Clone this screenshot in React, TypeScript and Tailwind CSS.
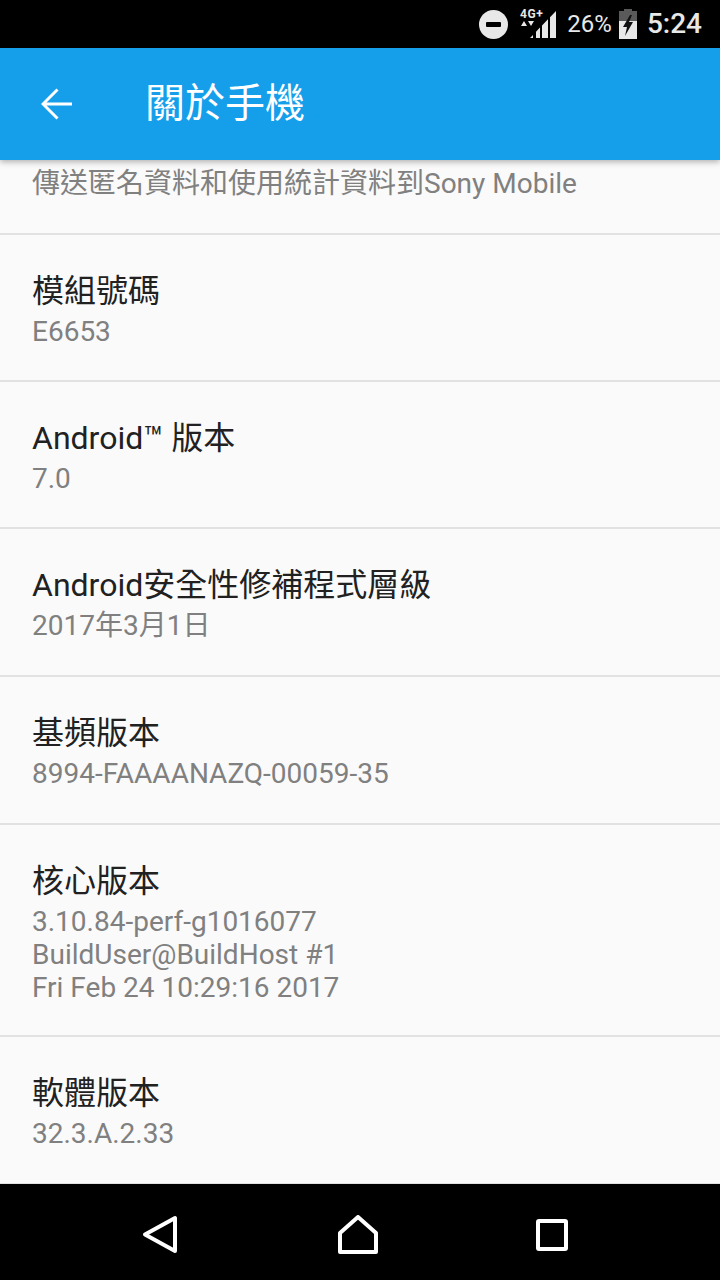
const font = "font-['Roboto','Noto_Sans_CJK_TC',sans-serif]";

type Info = { title: string; lines: string[]; height: string };

const rows: Info[] = [
  { title: '模組號碼', lines: ['E6653'], height: 'h-[147px]' },
  { title: 'Android™ 版本', lines: ['7.0'], height: 'h-[147px]' },
  { title: 'Android安全性修補程式層級', lines: ['2017年3月1日'], height: 'h-[148px]' },
  { title: '基頻版本', lines: ['8994-FAAAANAZQ-00059-35'], height: 'h-[148px]' },
  {
    title: '核心版本',
    lines: ['3.10.84-perf-g1016077', 'BuildUser@BuildHost #1', 'Fri Feb 24 10:29:16 2017'],
    height: 'h-[212px]',
  },
  { title: '軟體版本', lines: ['32.3.A.2.33'], height: 'h-[148px]' },
];

function SignalIcon() {
  return (
    <svg width="38" height="30" viewBox="0 0 38 30" className="text-[#e8e8e8]">
      <text x="0" y="9" fontSize="12" fontWeight="700" letterSpacing="0.6" fill="currentColor" fontFamily="Roboto, sans-serif">
        4G+
      </text>
      <path d="M1 17l3-5 3 5zM8 12h6l-3 5z" fill="currentColor" />
      <path d="M10 29h3v-3zM16 29h4V18.6l-4 4.2zM22 29h6V10.3l-6 6.2zM30 29h6V2l-6 6.2z" fill="currentColor" />
    </svg>
  );
}

function BatteryIcon() {
  return (
    <svg width="18" height="30" viewBox="0 0 18 30">
      <path d="M5 0h8v2h5v28H0V2h5z" fill="#e8e8e8" />
      <path d="M5 0h8v2h5v10H0V2h5z" fill="#5a5a5a" />
      <path d="M11 6L4 18h4l-2 9 8-14h-4l3-7z" fill="#111" />
    </svg>
  );
}

function StatusBar() {
  return (
    <div className="flex h-12 shrink-0 items-center justify-end bg-black pr-[18px] text-[#e8e8e8]">
      <div className="flex h-[29px] w-[29px] items-center justify-center rounded-full bg-[#e8e8e8]">
        <div className="h-[5px] w-[15px] rounded-[1px] bg-black" />
      </div>
      <div className="ml-[12px]">
        <SignalIcon />
      </div>
      <span className="ml-[9px] text-[24px] leading-none">26%</span>
      <div className="ml-[7px]">
        <BatteryIcon />
      </div>
      <span className="ml-[10px] text-[28px] leading-none font-medium">5:24</span>
    </div>
  );
}

function AppBar() {
  return (
    <div className="relative z-10 flex h-28 shrink-0 items-center bg-[#159eea] shadow-[0_2px_6px_rgba(0,0,0,0.3)]">
      <svg width="32" height="32" viewBox="0 0 32 32" fill="none" className="ml-[41px]">
        <path d="M31 16H2.5M16.5 1.5L2 16l14.5 14.5" stroke="#fff" strokeWidth="3" />
      </svg>
      <h1 className="ml-[72px] text-[40px] leading-none font-normal text-white">關於手機</h1>
    </div>
  );
}

function InfoRow({ title, lines, height }: Info) {
  return (
    <div className={`${height} shrink-0 border-b-2 border-[#e2e2e2] pt-[37px] pl-8`}>
      <div className="text-[32px] leading-[38px] text-[#212121]">{title}</div>
      <div className="mt-[5px] text-[28px] leading-[33px] text-[#808080]">
        {lines.map((l) => (
          <div key={l}>{l}</div>
        ))}
      </div>
    </div>
  );
}

function NavBar() {
  return (
    <div className="flex h-24 shrink-0 items-center justify-between bg-black pt-[5px] pr-[152px] pl-[142px]">
      <svg width="36" height="40" viewBox="0 0 36 40" fill="none">
        <path d="M33 3v33L3 19.5z" stroke="#fff" strokeWidth="4" strokeLinejoin="round" />
      </svg>
      <svg width="40" height="40" viewBox="0 0 40 40" fill="none" className="ml-[2px]">
        <path d="M2 37V18L20 2l18 16v19z" stroke="#fff" strokeWidth="4" strokeLinejoin="round" />
      </svg>
      <svg width="32" height="32" viewBox="0 0 32 32" fill="none">
        <rect x="2" y="2" width="28" height="28" rx="1" stroke="#fff" strokeWidth="4" />
      </svg>
    </div>
  );
}

export default function App() {
  return (
    <div className={`flex h-[1280px] w-[720px] flex-col overflow-hidden bg-[#fafafa] ${font}`}>
      <StatusBar />
      <AppBar />
      <div className="flex min-h-0 flex-1 flex-col overflow-hidden">
        <div className="h-[75px] shrink-0 border-b-2 border-[#e2e2e2] pl-8 text-[28px] leading-[47px] text-[#808080]">
          傳送匿名資料和使用統計資料到Sony Mobile
        </div>
        {rows.map((r) => (
          <InfoRow key={r.title} {...r} />
        ))}
      </div>
      <NavBar />
    </div>
  );
}
